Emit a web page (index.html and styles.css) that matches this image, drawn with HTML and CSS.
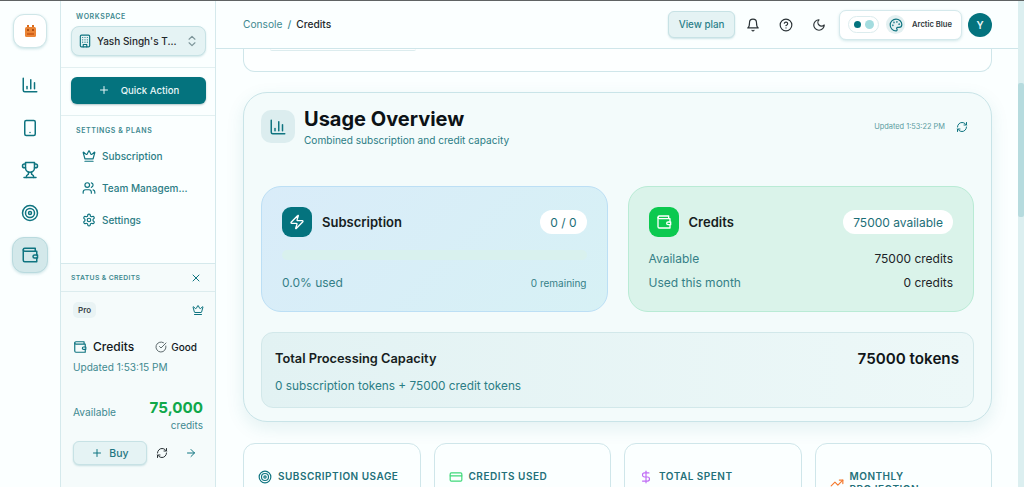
FILE: index.html
```html
<!doctype html>
<html>
    <head>
        <title>Credits</title>
        <link rel="stylesheet" href="styles.css">
    </head>
    <body>
        <!-- icon sprite -->
        <svg class="sprite" xmlns="http://www.w3.org/2000/svg">
            <symbol id="i-chart" viewBox="0 0 24 24"><path d="M3 3v16a2 2 0 0 0 2 2h16"/><path d="M18 17V9"/><path d="M13 17V5"/><path d="M8 17v-3"/></symbol>
            <symbol id="i-tablet" viewBox="0 0 24 24"><rect x="5" y="2" width="14" height="20" rx="2"/><path d="M12 18h.01"/></symbol>
            <symbol id="i-trophy" viewBox="0 0 24 24"><path d="M6 9H4.5a2.5 2.5 0 0 1 0-5H6"/><path d="M18 9h1.5a2.5 2.5 0 0 0 0-5H18"/><path d="M4 22h16"/><path d="M10 14.66V17c0 .55-.47.98-.97 1.21C7.85 18.75 7 20.24 7 22"/><path d="M14 14.66V17c0 .55.47.98.97 1.21C16.15 18.75 17 20.24 17 22"/><path d="M18 2H6v7a6 6 0 0 0 12 0V2Z"/></symbol>
            <symbol id="i-target" viewBox="0 0 24 24"><circle cx="12" cy="12" r="10"/><circle cx="12" cy="12" r="6"/><circle cx="12" cy="12" r="2"/></symbol>
            <symbol id="i-wallet" viewBox="0 0 24 24"><path d="M21 12V7H5a2 2 0 0 1 0-4h14v4"/><path d="M3 5v14a2 2 0 0 0 2 2h16v-5"/><path d="M18 12a2 2 0 0 0 0 4h4v-4Z"/></symbol>
            <symbol id="i-crown" viewBox="0 0 24 24"><path d="M11.562 3.266a.5.5 0 0 1 .876 0L15.39 8.87a1 1 0 0 0 1.516.294L21.183 5.5a.5.5 0 0 1 .798.519l-2.834 10.246a1 1 0 0 1-.956.734H5.81a1 1 0 0 1-.957-.734L2.02 6.02a.5.5 0 0 1 .798-.519l4.276 3.664a1 1 0 0 0 1.516-.294z"/><path d="M5 21h14"/></symbol>
            <symbol id="i-users" viewBox="0 0 24 24"><path d="M16 21v-2a4 4 0 0 0-4-4H6a4 4 0 0 0-4 4v2"/><circle cx="9" cy="7" r="4"/><path d="M22 21v-2a4 4 0 0 0-3-3.87"/><path d="M16 3.13a4 4 0 0 1 0 7.75"/></symbol>
            <symbol id="i-gear" viewBox="0 0 24 24"><path d="M12.22 2h-.44a2 2 0 0 0-2 2v.18a2 2 0 0 1-1 1.73l-.43.25a2 2 0 0 1-2 0l-.15-.08a2 2 0 0 0-2.73.73l-.22.38a2 2 0 0 0 .73 2.73l.15.1a2 2 0 0 1 1 1.72v.51a2 2 0 0 1-1 1.74l-.15.09a2 2 0 0 0-.73 2.73l.22.38a2 2 0 0 0 2.73.73l.15-.08a2 2 0 0 1 2 0l.43.25a2 2 0 0 1 1 1.73V20a2 2 0 0 0 2 2h.44a2 2 0 0 0 2-2v-.18a2 2 0 0 1 1-1.73l.43-.25a2 2 0 0 1 2 0l.15.08a2 2 0 0 0 2.73-.73l.22-.39a2 2 0 0 0-.73-2.73l-.15-.08a2 2 0 0 1-1-1.74v-.5a2 2 0 0 1 1-1.74l.15-.09a2 2 0 0 0 .73-2.73l-.22-.38a2 2 0 0 0-2.73-.73l-.15.08a2 2 0 0 1-2 0l-.43-.25a2 2 0 0 1-1-1.73V4a2 2 0 0 0-2-2z"/><circle cx="12" cy="12" r="3"/></symbol>
            <symbol id="i-building" viewBox="0 0 24 24"><rect x="4" y="2" width="16" height="20" rx="2"/><path d="M9 22v-4h6v4"/><path d="M8 6h.01"/><path d="M16 6h.01"/><path d="M12 6h.01"/><path d="M12 10h.01"/><path d="M12 14h.01"/><path d="M16 10h.01"/><path d="M16 14h.01"/><path d="M8 10h.01"/><path d="M8 14h.01"/></symbol>
            <symbol id="i-updown" viewBox="0 0 24 24"><path d="m7 15 5 5 5-5"/><path d="m7 9 5-5 5 5"/></symbol>
            <symbol id="i-plus" viewBox="0 0 24 24"><path d="M5 12h14"/><path d="M12 5v14"/></symbol>
            <symbol id="i-x" viewBox="0 0 24 24"><path d="M18 6 6 18"/><path d="m6 6 12 12"/></symbol>
            <symbol id="i-arrow" viewBox="0 0 24 24"><path d="M5 12h14"/><path d="m12 5 7 7-7 7"/></symbol>
            <symbol id="i-refresh" viewBox="0 0 24 24"><path d="M3 12a9 9 0 0 1 9-9 9.75 9.75 0 0 1 6.74 2.74L21 8"/><path d="M21 3v5h-5"/><path d="M21 12a9 9 0 0 1-9 9 9.75 9.75 0 0 1-6.74-2.74L3 16"/><path d="M8 16H3v5"/></symbol>
            <symbol id="i-bell" viewBox="0 0 24 24"><path d="M6 8a6 6 0 0 1 12 0c0 7 3 9 3 9H3s3-2 3-9"/><path d="M10.3 21a1.94 1.94 0 0 0 3.4 0"/></symbol>
            <symbol id="i-help" viewBox="0 0 24 24"><circle cx="12" cy="12" r="10"/><path d="M9.09 9a3 3 0 0 1 5.83 1c0 2-3 3-3 3"/><path d="M12 17h.01"/></symbol>
            <symbol id="i-moon" viewBox="0 0 24 24"><path d="M12 3a6 6 0 0 0 9 9 9 9 0 1 1-9-9Z"/></symbol>
            <symbol id="i-palette" viewBox="0 0 24 24"><path d="M12 22a1 1 0 0 1 0-20 10 9 0 0 1 10 9 5 5 0 0 1-5 5h-2.25a1.75 1.75 0 0 0-1.4 2.8l.3.4a1.75 1.75 0 0 1-1.4 2.8z"/><circle cx="13.5" cy="6.5" r=".5"/><circle cx="17.5" cy="10.5" r=".5"/><circle cx="6.5" cy="12.5" r=".5"/><circle cx="8.5" cy="7.5" r=".5"/></symbol>
            <symbol id="i-zap" viewBox="0 0 24 24"><path d="M4 14a1 1 0 0 1-.78-1.63l9.9-10.2a.5.5 0 0 1 .86.46l-1.92 6.02A1 1 0 0 0 13 10h7a1 1 0 0 1 .78 1.63l-9.9 10.2a.5.5 0 0 1-.86-.46l1.92-6.02A1 1 0 0 0 11 14z"/></symbol>
            <symbol id="i-check" viewBox="0 0 24 24"><path d="M21.801 10A10 10 0 1 1 17 3.335"/><path d="m9 11 3 3L22 4"/></symbol>
            <symbol id="i-card" viewBox="0 0 24 24"><rect x="2" y="5" width="20" height="14" rx="2"/><path d="M2 10h20"/></symbol>
            <symbol id="i-dollar" viewBox="0 0 24 24"><path d="M12 2v20"/><path d="M17 5H9.5a3.5 3.5 0 0 0 0 7h5a3.5 3.5 0 0 1 0 7H6"/></symbol>
            <symbol id="i-trend" viewBox="0 0 24 24"><path d="M22 7 13.5 15.5 8.5 10.5 2 17"/><path d="M16 7h6v6"/></symbol>
        </svg>

        <div class="app">
            <!-- icon rail -->
            <nav class="rail">
                <div class="logo">
                    <svg class="logo-mark" viewBox="0 0 11 12">
                        <rect x="2" y="0" width="2" height="3" fill="#d96a1c"/>
                        <rect x="7" y="0" width="2" height="3" fill="#d96a1c"/>
                        <rect x="0" y="2" width="11" height="10" rx="1.5" fill="#ea8436"/>
                        <rect x="2" y="4" width="2" height="2" fill="#b04f12"/>
                        <rect x="7" y="4" width="2" height="2" fill="#b04f12"/>
                        <rect x="2" y="8" width="7" height="2" fill="#d2601a"/>
                    </svg>
                </div>
                <a class="rail-item"><svg class="ico ico-18"><use href="#i-chart"/></svg></a>
                <a class="rail-item"><svg class="ico ico-18"><use href="#i-tablet"/></svg></a>
                <a class="rail-item"><svg class="ico ico-18"><use href="#i-trophy"/></svg></a>
                <a class="rail-item"><svg class="ico ico-18"><use href="#i-target"/></svg></a>
                <a class="rail-item active"><svg class="ico ico-18"><use href="#i-wallet"/></svg></a>
            </nav>

            <!-- sidebar -->
            <aside class="sidebar">
                <div class="side-block workspace">
                    <div class="side-label">WORKSPACE</div>
                    <button class="ws-select">
                        <svg class="ico ico-14"><use href="#i-building"/></svg>
                        <span class="ws-name">Yash Singh's T...</span>
                        <svg class="ico ico-14 muted"><use href="#i-updown"/></svg>
                    </button>
                </div>
                <div class="side-block quick">
                    <button class="quick-btn">
                        <svg class="ico ico-12"><use href="#i-plus"/></svg>
                        <span>Quick Action</span>
                    </button>
                </div>
                <div class="side-menu">
                    <div class="side-label">SETTINGS &amp; PLANS</div>
                    <a class="menu-item"><svg class="ico ico-14"><use href="#i-crown"/></svg>Subscription</a>
                    <a class="menu-item"><svg class="ico ico-14"><use href="#i-users"/></svg>Team Managem...</a>
                    <a class="menu-item"><svg class="ico ico-14"><use href="#i-gear"/></svg>Settings</a>
                </div>
                <div class="status">
                    <div class="status-head">
                        <span class="status-title">STATUS &amp; CREDITS</span>
                        <svg class="ico ico-12"><use href="#i-x"/></svg>
                    </div>
                    <div class="status-body">
                        <div class="plan-row">
                            <span class="plan-badge">Pro</span>
                            <svg class="ico ico-12"><use href="#i-crown"/></svg>
                        </div>
                        <div class="credit-row">
                            <svg class="ico ico-14"><use href="#i-wallet"/></svg>
                            <span class="credit-name">Credits</span>
                            <span class="credit-good"><svg class="ico ico-12"><use href="#i-check"/></svg>Good</span>
                        </div>
                        <div class="credit-updated">Updated 1:53:15 PM</div>
                        <div class="avail-row">
                            <span class="avail-label">Available</span>
                            <span class="avail-num">75,000</span>
                        </div>
                        <div class="avail-unit">credits</div>
                        <div class="buy-row">
                            <button class="buy-btn"><svg class="ico ico-12"><use href="#i-plus"/></svg>Buy</button>
                            <svg class="ico ico-12 dark"><use href="#i-refresh"/></svg>
                            <svg class="ico ico-12"><use href="#i-arrow"/></svg>
                        </div>
                    </div>
                </div>
            </aside>

            <!-- main column -->
            <main class="main">
                <header class="topbar">
                    <div class="crumbs"><span class="crumb">Console</span><span class="crumb-sep">/</span><span class="crumb-now">Credits</span></div>
                    <div class="top-actions">
                        <button class="plan-btn">View plan</button>
                        <svg class="ico ico-14 dark"><use href="#i-bell"/></svg>
                        <svg class="ico ico-14 dark"><use href="#i-help"/></svg>
                        <svg class="ico ico-14 dark"><use href="#i-moon"/></svg>
                        <div class="theme">
                            <span class="dots"><i class="dot dot-a"></i><i class="dot dot-b"></i></span>
                            <span class="palette"><svg class="ico ico-14"><use href="#i-palette"/></svg></span>
                            <span class="theme-name">Arctic Blue</span>
                        </div>
                        <span class="avatar">Y</span>
                    </div>
                </header>

                <div class="content">
                    <div class="prev-card"><div class="prev-btn"></div></div>

                    <section class="overview">
                        <div class="ov-head">
                            <span class="ov-icon"><svg class="ico ico-18"><use href="#i-chart"/></svg></span>
                            <div class="ov-titles">
                                <h1>Usage Overview</h1>
                                <p>Combined subscription and credit capacity</p>
                            </div>
                            <span class="ov-updated">Updated 1:53:22 PM</span>
                            <svg class="ico ico-12"><use href="#i-refresh"/></svg>
                        </div>

                        <div class="ov-grid">
                            <div class="panel panel-blue">
                                <div class="panel-head">
                                    <span class="panel-icon teal"><svg class="ico ico-16 white"><use href="#i-zap"/></svg></span>
                                    <span class="panel-title">Subscription</span>
                                    <span class="pill">0 / 0</span>
                                </div>
                                <div class="bar"></div>
                                <div class="panel-foot">
                                    <span>0.0% used</span>
                                    <span class="small">0 remaining</span>
                                </div>
                            </div>
                            <div class="panel panel-green">
                                <div class="panel-head">
                                    <span class="panel-icon green"><svg class="ico ico-16 white"><use href="#i-wallet"/></svg></span>
                                    <span class="panel-title">Credits</span>
                                    <span class="pill">75000 available</span>
                                </div>
                                <div class="panel-line first"><span>Available</span><b>75000 credits</b></div>
                                <div class="panel-line"><span>Used this month</span><b>0 credits</b></div>
                            </div>
                        </div>

                        <div class="capacity">
                            <div class="cap-top"><span class="cap-title">Total Processing Capacity</span><span class="cap-num">75000 tokens</span></div>
                            <div class="cap-sub">0 subscription tokens + 75000 credit tokens</div>
                        </div>
                    </section>

                    <div class="stats">
                        <div class="stat"><svg class="ico ico-14"><use href="#i-target"/></svg><span>SUBSCRIPTION USAGE</span></div>
                        <div class="stat"><svg class="ico ico-14 c-green"><use href="#i-card"/></svg><span>CREDITS USED</span></div>
                        <div class="stat"><svg class="ico ico-14 c-purple"><use href="#i-dollar"/></svg><span>TOTAL SPENT</span></div>
                        <div class="stat stat-wrap"><svg class="ico ico-14 c-orange"><use href="#i-trend"/></svg><span>MONTHLY PROJECTION</span></div>
                    </div>
                </div>
            </main>

            <div class="scroll"><div class="scroll-thumb"></div></div>
        </div>
    </body>
</html>
```

FILE: styles.css
```css
* {
    box-sizing: border-box;
}

html, body {
    margin: 0;
    height: 100%;
    overflow: hidden;
}

body {
    font-family: 'Inter', 'Liberation Sans', sans-serif;
    color: #12181c;
    background: #fbffff;
}

.sprite {
    display: none;
}

button {
    font-family: inherit;
    padding: 0;
}

h1, p {
    margin: 0;
}

/* ICONS */
.ico {
    fill: none;
    stroke: #0f7480;
    stroke-width: 2;
    stroke-linecap: round;
    stroke-linejoin: round;
    flex: none;
}
.ico-12 { width: 12px; height: 12px; }
.ico-14 { width: 14px; height: 14px; }
.ico-16 { width: 16px; height: 16px; }
.ico-18 { width: 18px; height: 18px; }
.ico.white { stroke: #fff; }
.ico.dark { stroke: #2a3236; }
.ico.muted { stroke: #7d9599; }
.ico.c-green { stroke: #3fd97a; }
.ico.c-purple { stroke: #c06cf5; }
.ico.c-orange { stroke: #f57a30; }

.app {
    display: flex;
    height: 487px;
    border-top: 1px solid #5f6364;
}

/* RAIL */
.rail {
    width: 61px;
    flex: none;
    border-right: 1px solid #d5e9ec;
    display: flex;
    flex-direction: column;
    align-items: center;
    padding-top: 13px;
}

.logo {
    width: 34px;
    height: 34px;
    background: #fff;
    border: 1px solid #cfe6e8;
    border-radius: 11px;
    box-shadow: 0 1px 3px rgba(15, 116, 128, 0.2);
    display: flex;
    align-items: center;
    justify-content: center;
    margin-bottom: 19px;
}

.logo-mark {
    width: 11px;
    height: 12px;
}

.rail-item {
    width: 36px;
    height: 36px;
    margin-bottom: 6.5px;
    border-radius: 12px;
    display: flex;
    align-items: center;
    justify-content: center;
}

.rail-item.active {
    background: #d3e8ea;
    border: 1px solid #b9dade;
    box-shadow: 0 1px 3px rgba(15, 116, 128, 0.2);
}

/* SIDEBAR */
.sidebar {
    width: 155px;
    flex: none;
    border-right: 1px solid #d5e9ec;
    display: flex;
    flex-direction: column;
}

.side-label {
    font-size: 7px;
    font-weight: 600;
    letter-spacing: 0.6px;
    color: #3e8990;
    line-height: 9px;
}

.side-block {
    padding: 0 10px;
    border-bottom: 1px solid #e3f0f1;
}

.workspace {
    height: 67px;
    padding-top: 11px;
}
.workspace .side-label {
    padding-left: 5px;
}

.ws-select {
    width: 135px;
    height: 30px;
    margin-top: 5px;
    display: flex;
    align-items: center;
    padding: 0 6px 0 6px;
    background: #e5f3f4;
    border: 1px solid #c7e2e5;
    border-radius: 8px;
    box-shadow: 0 1px 2px rgba(15, 116, 128, 0.18);
}

.ws-name {
    flex: 1;
    text-align: left;
    margin-left: 5px;
    font-size: 10px;
    font-weight: 500;
    color: #1e272b;
    white-space: nowrap;
}

.quick {
    height: 48px;
    padding-top: 9px;
}

.quick-btn {
    width: 135px;
    height: 27px;
    padding-bottom: 1px;
    display: flex;
    align-items: center;
    justify-content: center;
    gap: 11px;
    background: #04737e;
    color: #e9f7f8;
    border: none;
    border-radius: 6px;
    font-size: 9.6px;
    font-weight: 500;
    box-shadow: 0 1px 2px rgba(0, 60, 70, 0.3);
}
.quick-btn .ico {
    stroke: #e9f7f8;
}

.side-menu {
    flex: 1;
    padding: 10px 15px 0;
}

.menu-item {
    display: flex;
    align-items: center;
    gap: 6px;
    height: 32px;
    padding-left: 6px;
    font-size: 10px;
    font-weight: 500;
    color: #2b7d85;
}
.side-label + .menu-item {
    margin-top: 5px;
}

.status {
    height: 224px;
    flex: none;
    background: #f5fbfb;
    border-top: 1px solid #d5e9ec;
}

.status-head {
    height: 28px;
    padding: 0 13px 0 10px;
    display: flex;
    align-items: center;
    justify-content: space-between;
    border-bottom: 1px solid #dcecee;
}

.status-title {
    font-size: 6.8px;
    font-weight: 600;
    letter-spacing: 0.35px;
    color: #3e8990;
}

.status-body {
    padding: 10px 11px 0 12px;
}

.plan-row {
    display: flex;
    align-items: center;
    justify-content: space-between;
}

.plan-badge {
    background: #e9f3f4;
    border-radius: 5px;
    font-size: 8px;
    font-weight: 600;
    line-height: 16px;
    padding: 0 5px;
    color: #3a4448;
}

.credit-row {
    display: flex;
    align-items: center;
    margin-top: 21px;
}

.credit-name {
    flex: 1;
    margin-left: 6px;
    font-size: 12px;
    font-weight: 500;
}

.credit-good {
    display: flex;
    align-items: center;
    gap: 4px;
    margin-right: 7px;
    font-size: 10px;
    font-weight: 500;
}
.credit-good .ico {
    stroke: #39464a;
    stroke-width: 1.6;
}

.credit-updated {
    margin-top: 7px;
    font-size: 10.1px;
    color: #3e8990;
}

.avail-row {
    display: flex;
    align-items: center;
    justify-content: space-between;
    margin-top: 24px;
    padding-right: 1px;
}

.avail-label {
    font-size: 10.2px;
    color: #3e8990;
    margin-top: 9px;
}

.avail-num {
    font-size: 15.2px;
    font-weight: 700;
    color: #0fa84a;
}

.avail-unit {
    text-align: right;
    font-size: 10px;
    line-height: 12px;
    margin-top: 1px;
    padding-right: 1px;
    color: #3e8990;
}

.buy-row {
    display: flex;
    align-items: center;
    margin-top: 10px;
    gap: 9px;
}
.buy-row .ico + .ico {
    margin-left: 8px;
}

.buy-btn {
    width: 74px;
    height: 24px;
    display: flex;
    align-items: center;
    justify-content: center;
    gap: 6px;
    background: #e5f3f4;
    border: 1px solid #c7e2e5;
    border-radius: 6px;
    font-size: 10.5px;
    font-weight: 500;
    color: #1f7781;
    box-shadow: 0 1px 2px rgba(15, 116, 128, 0.2);
}

/* MAIN */
.main {
    flex: 1;
    min-width: 0;
    overflow: hidden;
}

.topbar {
    height: 48px;
    padding: 0 26px 0 27px;
    display: flex;
    align-items: center;
    justify-content: space-between;
    border-bottom: 1px solid #cfe6ea;
    background: #fbffff;
}

.crumbs {
    margin-bottom: 2px;
    font-size: 10.2px;
    font-weight: 500;
}
.crumb { color: #3e8990; font-weight: 400; }
.crumb-sep { color: #3e8990; margin: 0 5px; }
.crumb-now { color: #23292c; }

.top-actions {
    display: flex;
    align-items: center;
}
.top-actions > .ico {
    margin-left: 19px;
}
.top-actions > .plan-btn + .ico {
    margin-left: 11px;
}

.plan-btn {
    width: 67px;
    height: 27px;
    background: #e5f3f4;
    border: 1px solid #c7e2e5;
    border-radius: 6px;
    font-size: 9.8px;
    font-weight: 500;
    color: #2b8089;
    box-shadow: 0 1px 2px rgba(15, 116, 128, 0.2);
}

.theme {
    height: 30px;
    margin-left: 13px;
    padding: 0 9px 0 8px;
    display: flex;
    align-items: center;
    background: #fff;
    border: 1px solid #d5e9ec;
    border-radius: 7px;
    box-shadow: 0 1px 3px rgba(15, 116, 128, 0.18);
}

.dots {
    display: flex;
    align-items: center;
    gap: 4px;
    padding: 0 4px 0 5px;
    width: 31px;
    height: 17px;
    border: 1px solid #dcecee;
    border-radius: 9px;
}

.dot {
    width: 7px;
    height: 7px;
    border-radius: 50%;
    background: #04737e;
}
.dot-b {
    width: 9px;
    height: 9px;
    background: #a3dcdf;
}

.palette {
    width: 19px;
    height: 19px;
    margin-left: 7px;
    border-radius: 50%;
    background: #e3f0f1;
    display: flex;
    align-items: center;
    justify-content: center;
}

.theme-name {
    margin-left: 7px;
    font-size: 7.6px;
    font-weight: 600;
    color: #323a3e;
    white-space: nowrap;
}

.avatar {
    width: 24px;
    height: 24px;
    margin-left: 6px;
    border-radius: 50%;
    background: #04737e;
    color: #e9f7f8;
    font-size: 10px;
    font-weight: 600;
    display: flex;
    align-items: center;
    justify-content: center;
}

.content {
    padding: 0 26px 0 27px;
}

.prev-card {
    height: 23px;
    border: 1px solid #cfe6ea;
    border-top: none;
    border-radius: 0 0 12px 12px;
    background: #fdffff;
    padding-left: 26px;
}

.prev-btn {
    width: 146px;
    height: 2px;
    border-bottom: 1px solid #dcecee;
    border-radius: 0 0 8px 8px;
}

.overview {
    height: 330px;
    margin-top: 20px;
    padding: 17px 17px;
    background: #f3fbfb;
    border: 1px solid #c9e4e8;
    border-radius: 24px;
    box-shadow: 0 6px 18px rgba(15, 116, 128, 0.1);
}

.ov-head {
    display: flex;
    align-items: center;
    height: 33px;
    padding-right: 6px;
}

.ov-icon {
    width: 34px;
    height: 33px;
    border-radius: 10px;
    background: #dcedef;
    display: flex;
    align-items: center;
    justify-content: center;
}

.ov-titles {
    flex: 1;
    margin-left: 9px;
}

.ov-titles h1 {
    font-size: 20px;
    font-weight: 700;
    line-height: 25px;
    color: #0c1216;
}

.ov-titles p {
    margin-top: 1px;
    font-size: 10.1px;
    line-height: 14px;
    color: #2b7d85;
}

.ov-updated {
    font-size: 7.4px;
    color: #5b9ba1;
    margin-right: 11px;
}

.ov-grid {
    display: grid;
    grid-template-columns: 1fr 1fr;
    gap: 20px;
    margin-top: 43px;
}

.panel {
    height: 126px;
    padding: 20px 20px 0;
    border-radius: 20px;
}

.panel-blue {
    background: linear-gradient(135deg, #d9ecf9, #d7f1f5);
    border: 1px solid #bcdff5;
}

.panel-green {
    background: #daf3ea;
    border: 1px solid #b9ebd5;
}

.panel-head {
    display: flex;
    align-items: center;
}

.panel-icon {
    width: 30px;
    height: 30px;
    border-radius: 9px;
    display: flex;
    align-items: center;
    justify-content: center;
}
.panel-icon.teal { background: #04737e; }
.panel-icon.green { background: #0bc94f; }

.panel-title {
    flex: 1;
    margin-left: 10px;
    font-size: 13px;
    font-weight: 600;
    color: #161d21;
}

.pill {
    height: 24px;
    padding: 0 10px;
    display: flex;
    align-items: center;
    background: #fff;
    border-radius: 12px;
    font-size: 12px;
    color: #1c6e77;
}

.bar {
    height: 10px;
    margin-top: 13px;
    border-radius: 5px;
    background: #d9f1ee;
}

.panel-foot {
    display: flex;
    align-items: center;
    justify-content: space-between;
    margin-top: 15px;
    font-size: 12px;
    color: #357f87;
}
.panel-foot .small {
    font-size: 10px;
}

.panel-line {
    display: flex;
    justify-content: space-between;
    align-items: center;
    height: 24px;
    font-size: 12px;
    color: #357f87;
}
.panel-line.first {
    margin-top: 9px;
}
.panel-line b {
    font-weight: 400;
    color: #1c2327;
}

.capacity {
    height: 76px;
    margin-top: 20px;
    padding: 0 14px 0 13px;
    background: linear-gradient(90deg, #e2f2f3, #edf8f8);
    border: 1px solid #d2e8ea;
    border-radius: 12px;
}

.cap-top {
    display: flex;
    align-items: center;
    justify-content: space-between;
    margin-top: 16px;
}

.cap-title {
    font-size: 12.8px;
    font-weight: 600;
    color: #161d21;
}

.cap-num {
    font-size: 15.2px;
    font-weight: 600;
    color: #0f1519;
}

.cap-sub {
    margin-top: 11px;
    font-size: 11.8px;
    color: #2b7d85;
}

.stats {
    display: grid;
    grid-template-columns: repeat(4, 1fr);
    gap: 13px;
    margin-top: 21px;
}

.stat {
    height: 70px;
    padding: 26px 14px 0;
    display: flex;
    align-items: flex-start;
    gap: 6px;
    background: #fbffff;
    border: 1px solid #cfe6ea;
    border-radius: 12px;
    font-size: 10px;
    font-weight: 600;
    letter-spacing: 0.5px;
    line-height: 13px;
    color: #237079;
}

.stat-wrap {
    padding-top: 26px;
}
.stat-wrap .ico {
    margin-top: 6px;
}
.stat-wrap span {
    width: 90px;
}

/* SCROLLBAR */
.scroll {
    width: 6px;
    flex: none;
    background: #dceff0;
}

.scroll-thumb {
    height: 134px;
    margin-top: 82px;
    border-radius: 2px;
    background: #b6dbde;
}
```
